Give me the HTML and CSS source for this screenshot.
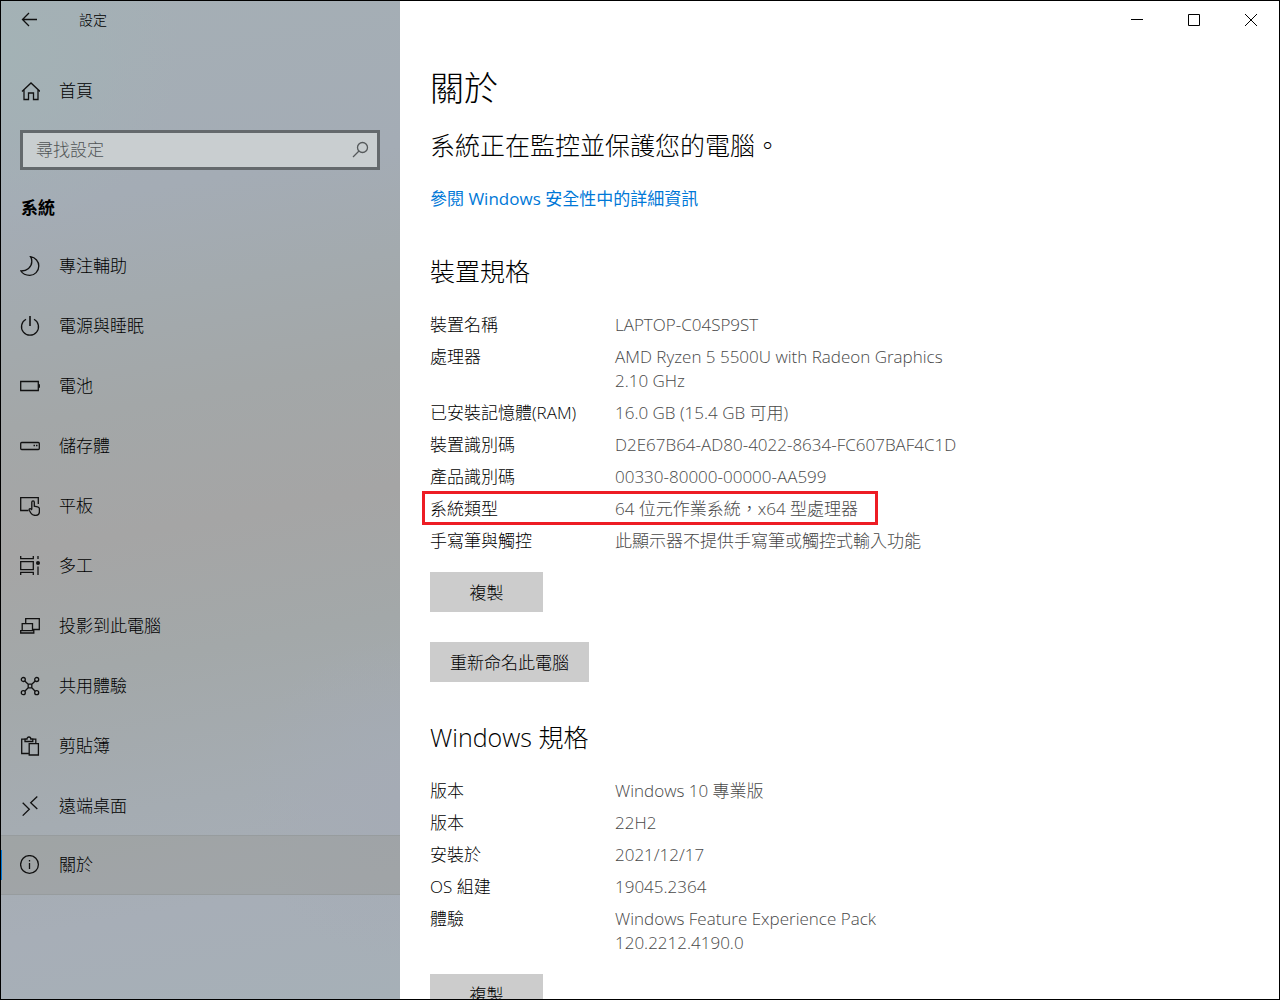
FILE: index.html
```
<!DOCTYPE html>
<html lang="zh-Hant">
<head>
    <meta charset="UTF-8">
    <meta name="viewport" content="width=device-width, initial-scale=1.0">
    <title>設定</title>
    <link rel="stylesheet" href="styles.css">
</head>
<body>

    <div class="window">
        <aside class="sidebar">
            <div class="sidebar-top">
                <button type="button" class="back" aria-label="返回">
                    <svg class="icon" viewBox="0 0 20 20"><path d="M17 9.5H2.5M9 3L2.5 9.5L9 16"/></svg>
                </button>
                <span class="app-title">設定</span>
            </div>

            <a href="#" class="nav-link home">
                <svg class="icon" viewBox="0 0 20 20"><path d="M2 10.5L11 2L20 10.5M4 9V18.5H8.5V12H13.5V18.5H18V9"/></svg>
                首頁
            </a>

            <form class="search">
                <input type="text" class="search-input" placeholder="尋找設定" aria-label="尋找設定">
                <button type="submit" class="search-btn" aria-label="搜尋">
                    <svg class="icon" viewBox="0 0 20 20"><circle cx="12.5" cy="7.5" r="5"/><path d="M9 11L3 17"/></svg>
                </button>
            </form>

            <h2 class="group-title">系統</h2>

            <nav class="nav">
                <a href="#" class="nav-link">
                    <svg class="icon" viewBox="0 0 20 20"><path d="M10.5 .7C15.5 1.5 18.8 5.5 18.8 10C18.8 15.2 14.7 19.3 9.8 19.3C6 19.3 2.6 17.8 .9 15C6.8 15.2 11.8 11 11.8 5.5C11.8 3.6 11.4 2 10.5 .7Z"/></svg>
                    專注輔助
                </a>
                <a href="#" class="nav-link">
                    <svg class="icon" viewBox="0 0 20 20"><path d="M6 3.2A8.5 8.5 0 1 0 14 3.2"/><path d="M10 0V10" stroke-width="1.6"/></svg>
                    電源與睡眠
                </a>
                <a href="#" class="nav-link">
                    <svg class="icon" viewBox="0 0 20 20"><path d="M.7 5.5H18.3V14.5H.7Z"/><path d="M19.2 8.3V11.7" stroke-width="1.6"/></svg>
                    電池
                </a>
                <a href="#" class="nav-link">
                    <svg class="icon" viewBox="0 0 20 20"><rect x=".7" y="6.5" width="18.6" height="7" rx="1"/><path d="M13.5 9.5H15M16 9.5H17.5"/></svg>
                    儲存體
                </a>
                <a href="#" class="nav-link">
                    <svg class="icon" viewBox="0 0 20 20"><path d="M8.5 14.5H.7V1.7H18.3V8"/><path d="M11.8 13.5V6.2C11.8 4.5 14.3 4.5 14.3 6.2V10.2L17.6 10.8C18.8 11 19.4 11.6 19.4 12.8V15.5C19.4 18 17.6 19.4 15.2 19.4C13 19.4 11.8 18.8 10.8 17L9.3 14.3C8.7 12.8 10.2 12 11.1 13.1L11.8 14"/></svg>
                    平板
                </a>
                <a href="#" class="nav-link">
                    <svg class="icon" viewBox="0 0 20 20"><path d="M.7 0V2.7H13.3V0M.7 5.6H13.3V13.6H.7ZM.7 19V16.4H13.3V19M18 0V3M18 10.5V19"/><circle class="fill" cx="18" cy="7" r="2"/></svg>
                    多工
                </a>
                <a href="#" class="nav-link">
                    <svg class="icon" viewBox="0 0 20 20"><path d="M5.7 7V2.7H19.3V13.5H13M2.2 14.5V7.7H12.5V14.5M.7 14.7H13.8V17H.7Z"/></svg>
                    投影到此電腦
                </a>
                <a href="#" class="nav-link">
                    <svg class="icon" viewBox="0 0 20 20"><circle cx="3.3" cy="3.5" r="2"/><circle cx="16.7" cy="3.5" r="2"/><circle cx="3.3" cy="16.7" r="2"/><circle cx="16.7" cy="16.7" r="2"/><path d="M8.2 8.2H11.8V11.8H8.2ZM4.8 5L8.2 8.2M15.2 5L11.8 8.2M4.8 15.2L8.2 11.8M15.2 15.2L11.8 11.8"/></svg>
                    共用體驗
                </a>
                <a href="#" class="nav-link">
                    <svg class="icon" viewBox="0 0 20 20"><path d="M8.5 17.5H1.7V3.2H5M12.5 3.2H15.8V7M5 5.5V3H7C7 .3 10.8 .3 10.8 3H12.8V5.5ZM9.2 7.7H18.4V19H9.2Z"/></svg>
                    剪貼簿
                </a>
                <a href="#" class="nav-link">
                    <svg class="icon" viewBox="0 0 20 20"><path d="M2.7 6.8L9.3 13.2L2.7 19.6M17.3 .5L10.7 6.7L17.3 13"/></svg>
                    遠端桌面
                </a>
                <a href="#" class="nav-link active" aria-current="page">
                    <svg class="icon" viewBox="0 0 20 20"><circle cx="9.5" cy="9.5" r="8.9"/><path d="M9.5 8V14M9.5 5V6.5"/></svg>
                    關於
                </a>
            </nav>
        </aside>

        <main class="content">
            <div class="window-controls">
                <button type="button" aria-label="最小化">
                    <svg viewBox="0 0 12 12"><path d="M0 5.5H12"/></svg>
                </button>
                <button type="button" aria-label="最大化">
                    <svg viewBox="0 0 12 12"><path d="M.5 .5H11.5V11.5H.5Z"/></svg>
                </button>
                <button type="button" aria-label="關閉">
                    <svg viewBox="0 0 12 12"><path d="M0 0L12 12M12 0L0 12"/></svg>
                </button>
            </div>

            <div class="page">
                <h1>關於</h1>
                <p class="status">系統正在監控並保護您的電腦。</p>
                <a href="#" class="details-link">參閱 Windows 安全性中的詳細資訊</a>

                <section class="device">
                    <h2>裝置規格</h2>
                    <dl class="specs">
                        <div class="row"><dt>裝置名稱</dt><dd>LAPTOP-C04SP9ST</dd></div>
                        <div class="row"><dt>處理器</dt><dd>AMD Ryzen 5 5500U with Radeon Graphics 2.10 GHz</dd></div>
                        <div class="row"><dt>已安裝記憶體(RAM)</dt><dd>16.0 GB (15.4 GB 可用)</dd></div>
                        <div class="row"><dt>裝置識別碼</dt><dd>D2E67B64-AD80-4022-8634-FC607BAF4C1D</dd></div>
                        <div class="row"><dt>產品識別碼</dt><dd>00330-80000-00000-AA599</dd></div>
                        <div class="row marked"><dt>系統類型</dt><dd>64 位元作業系統，x64 型處理器</dd></div>
                        <div class="row"><dt>手寫筆與觸控</dt><dd>此顯示器不提供手寫筆或觸控式輸入功能</dd></div>
                    </dl>
                    <button type="button" class="btn">複製</button>
                    <button type="button" class="btn">重新命名此電腦</button>
                </section>

                <section class="edition">
                    <h2>Windows 規格</h2>
                    <dl class="specs">
                        <div class="row"><dt>版本</dt><dd>Windows 10 專業版</dd></div>
                        <div class="row"><dt>版本</dt><dd>22H2</dd></div>
                        <div class="row"><dt>安裝於</dt><dd>2021/12/17</dd></div>
                        <div class="row"><dt>OS 組建</dt><dd>19045.2364</dd></div>
                        <div class="row"><dt>體驗</dt><dd>Windows Feature Experience Pack 120.2212.4190.0</dd></div>
                    </dl>
                    <button type="button" class="btn">複製</button>
                </section>
            </div>
        </main>
    </div>

</body>
</html>
```
FILE: styles.css
```
* {
    box-sizing: border-box;
}
body {
    margin: 0;
    font-family: "Open Sans", "Noto Sans CJK TC", sans-serif;
    font-size: 17px;
    font-weight: 300;
    line-height: 24px;
    color: #000;
}
h1, h2, p, dl, dd {
    margin: 0;
    font-weight: 300;
}
a {
    text-decoration: none;
}
button, input {
    font: inherit;
    color: inherit;
    border: none;
    border-radius: 0;
    background: none;
    padding: 0;
}
.window {
    display: flex;
    height: 100vh;
    border: 1px solid #000;
    background: #fff;
    overflow: hidden;
}

/* left pane */
.sidebar {
    flex: 0 0 399px;
    background:
        radial-gradient(circle at 0 5%, #a3b2b5 0, transparent 180px),
        radial-gradient(circle at 100% 80%, #a5abb5 0, transparent 160px),
        linear-gradient(170deg, #a5afb5 0%, #a4acb5 20%, #a3aaae 30%, #a3a7a8 40%, #a5a5a5 52%, #a3a8a9 64%, #a5acb2 78%, #a7aeb7 88%, #a6b0b7 100%);
}
.sidebar-top {
    display: flex;
    align-items: center;
    height: 38px;
    padding-left: 19px;
    gap: 39px;
}
.back {
    display: flex;
}
.app-title {
    font-size: 14px;
}
.icon {
    flex: none;
    width: 20px;
    height: 20px;
    fill: none;
    stroke: #111;
    stroke-width: 1.3;
}
.icon .fill {
    fill: #111;
    stroke: none;
}
.nav-link {
    position: relative;
    display: flex;
    align-items: center;
    gap: 19px;
    height: 60px;
    padding-left: 19px;
    color: #000;
}
.home {
    margin-top: 22px;
}
.search {
    display: flex;
    align-items: center;
    height: 40px;
    margin: 9px 20px 0 19px;
    border: 3px solid #64696c;
    background: #c9ced0;
}
.search-input {
    flex: 1;
    min-width: 0;
    padding-left: 13px;
    outline: none;
}
.search-input::placeholder {
    color: #505456;
    opacity: 1;
}
.search-btn {
    display: flex;
    margin-right: 7px;
}
.search .icon {
    stroke: #55595b;
}
.group-title {
    margin: 26px 0 16px 20px;
    font-size: 17px;
    font-weight: 700;
}
.nav-link.active {
    margin-top: -1px;
    background: rgba(150, 150, 140, 0.35);
    border-top: 1px solid #979c9e;
    border-bottom: 1px solid #979c9e;
}
.nav-link.active::before {
    content: "";
    position: absolute;
    left: 0;
    top: 14px;
    width: 1px;
    height: 30px;
    background: #0078d7;
}

/* right pane */
.content {
    flex: 1;
    min-width: 0;
    overflow: hidden;
}
.window-controls {
    display: flex;
    justify-content: flex-end;
    height: 38px;
}
.window-controls button {
    display: flex;
    align-items: center;
    justify-content: center;
    width: 57px;
}
.window-controls svg {
    width: 12px;
    height: 12px;
    fill: none;
    stroke: #000;
}
.page {
    padding: 27px 30px;
}
h1 {
    font-size: 34px;
    line-height: 44px;
}
.status {
    margin-top: 19px;
    font-size: 25px;
    line-height: 32px;
}
.details-link {
    display: inline-block;
    margin-top: 26px;
    color: #0078d7;
    font-weight: 400;
}
.page h2 {
    font-size: 25px;
    line-height: 32px;
}
.device {
    margin-top: 44px;
}
.edition {
    margin-top: 39px;
}
.specs {
    display: flex;
    flex-direction: column;
    align-items: flex-start;
    gap: 8px;
    margin: 26px 0 19px;
}
.row {
    position: relative;
    display: flex;
}
.row dt {
    flex: none;
    width: 185px;
}
.row dd {
    max-width: 360px;
    color: #484848;
}
.marked::after {
    content: "";
    position: absolute;
    inset: -6px -20px -4px -8px;
    border: 3px solid #ed1c24;
}
.btn {
    display: block;
    height: 40px;
    min-width: 113px;
    padding: 2px 20px 0;
    background: #ccc;
}
.btn + .btn {
    margin-top: 30px;
}
```
